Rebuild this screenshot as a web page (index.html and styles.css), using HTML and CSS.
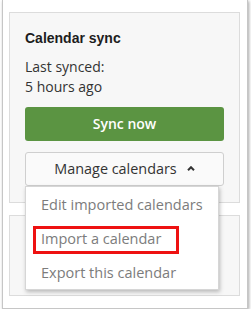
FILE: index.html
```html
<!DOCTYPE html>
<html lang="en">
<head>
  <meta charset="UTF-8" />
  <title>Calendar sync</title>
  <link rel="stylesheet" href="styles.css">
</head>
<body>

  <div class="frame">
    <div class="card">
      <h2 class="card-title">Calendar sync</h2>
      <p class="last-synced">Last synced:<br>5 hours ago</p>

      <button class="btn btn-sync">Sync now</button>

      <div class="manage">
        <button class="btn btn-manage">
          Manage calendars
          <svg class="caret" width="8" height="5" viewBox="0 0 8 5">
            <path d="M1 4.2 L4 1.2 L7 4.2" fill="none" stroke="#333" stroke-width="2"/>
          </svg>
        </button>

        <ul class="dropdown">
          <li><a href="#">Edit imported calendars</a></li>
          <li><a href="#"><span class="highlight">Import a calendar</span></a></li>
          <li><a href="#">Export this calendar</a></li>
        </ul>
      </div>
    </div>

    <div class="card card-next"></div>
  </div>

</body>
</html>
```

FILE: styles.css
```css
* {
  margin: 0;
  padding: 0;
  box-sizing: border-box;
}

html, body {
  background: #fff;
  font-family: "Open Sans", Arial, sans-serif;
  font-size: 14px;
  line-height: 20px;
  color: #333;
}

.frame {
  margin: 0 3px 0 2px;
  height: 309px;
  padding: 12px 7px 0 6px;
  border: 1px solid #c6c6c6;
  border-top: 0;
  box-shadow: 1px 1px 3px rgba(0, 0, 0, 0.35);
  background: #fff;
}

.card {
  background: #f7f7f7;
  border: 1px solid #dcdcdc;
  padding: 15px 15px 16px 15px;
}

.card-title {
  font-family: "Liberation Sans", Arial, sans-serif;
  font-size: 14px;
  font-weight: bold;
  line-height: 20px;
  color: #1d1d1d;
}

.last-synced {
  margin-top: 9px;
  color: #333;
}

.btn {
  display: block;
  width: 100%;
  font-family: "Open Sans", Arial, sans-serif;
  font-size: 14px;
  line-height: 20px;
  cursor: pointer;
}

.btn-sync {
  margin-top: 10px;
  padding: 7px 12px;
  border: 0;
  border-radius: 3px;
  background: #5b9442;
  color: #fff;
  font-weight: 600;
}

.manage {
  position: relative;
  margin-top: 11px;
}

.btn-manage {
  display: flex;
  align-items: center;
  justify-content: center;
  gap: 10px;
  padding: 6px 12px;
  border: 1px solid #cfcfcf;
  border-radius: 3px;
  background: #fafafa;
  color: #333;
  font-size: 14.4px;
}

.caret {
  display: block;
  margin-top: -1px;
}

.dropdown {
  position: absolute;
  top: 100%;
  left: 0;
  width: 194px;
  list-style: none;
  background: #fff;
  border: 1px solid #d6d6d6;
  box-shadow: 1px 2px 4px rgba(0, 0, 0, 0.25);
  z-index: 10;
}

.dropdown a {
  display: block;
  padding: 8px 16px 6px 15px;
  font-size: 14.5px;
  color: #7c7c7c;
  text-decoration: none;
  white-space: nowrap;
}

.highlight {
  margin-left: -8px;
  padding: 0 15px 3px 5px;
  border: 3px solid #ee1111;
}

.card-next {
  margin-top: 12px;
  height: 81px;
}
```
